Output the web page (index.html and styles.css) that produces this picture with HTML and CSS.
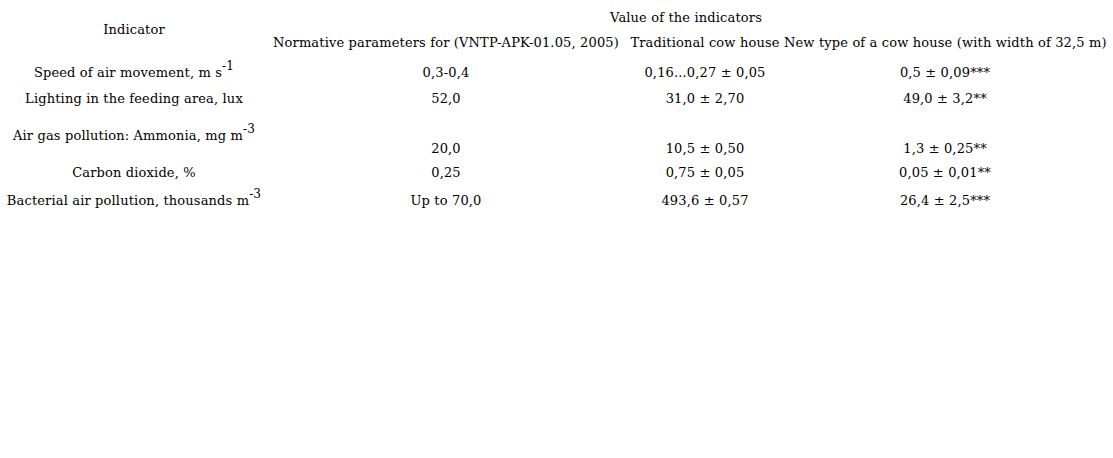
FILE: index.html
```html
<!DOCTYPE html>
<html>
<head>
<meta charset="utf-8">
<link rel="stylesheet" href="styles.css">
</head>
<body>
<table class="data">
  <colgroup>
    <col class="c0"><col class="c1"><col class="c2"><col class="c3">
  </colgroup>
  <tr class="r1">
    <td rowspan="2" class="ind">Indicator</td>
    <td colspan="3">Value of the indicators</td>
  </tr>
  <tr class="r2">
    <td>Normative parameters for (VNTP-APK-01.05, 2005)</td>
    <td>Traditional cow house</td>
    <td>New type of a cow house (with width of 32,5 m)</td>
  </tr>
  <tr class="r3">
    <td>Speed of air movement, m s<sup>-1</sup></td>
    <td>0,3-0,4</td>
    <td>0,16...0,27 ± 0,05</td>
    <td>0,5 ± 0,09***</td>
  </tr>
  <tr class="r4">
    <td>Lighting in the feeding area, lux</td>
    <td>52,0</td>
    <td>31,0 ± 2,70</td>
    <td>49,0 ± 3,2**</td>
  </tr>
  <tr class="r5">
    <td class="top">Air gas pollution: Ammonia, mg m<sup>-3</sup></td>
    <td class="bot">20,0</td>
    <td class="bot">10,5 ± 0,50</td>
    <td class="bot">1,3 ± 0,25**</td>
  </tr>
  <tr class="r6">
    <td>Carbon dioxide, %</td>
    <td>0,25</td>
    <td>0,75 ± 0,05</td>
    <td>0,05 ± 0,01**</td>
  </tr>
  <tr class="r7">
    <td>Bacterial air pollution, thousands m<sup>-3</sup></td>
    <td>Up to 70,0</td>
    <td>493,6 ± 0,57</td>
    <td>26,4 ± 2,5***</td>
  </tr>
</table>
</body>
</html>
```
FILE: styles.css
```css
body {
  margin: 7px 2px 8px;
  background: #fff;
  color: #000;
  font-family: "DejaVu Serif", serif;
  font-size: 13px;
  letter-spacing: 0.15px;
}
.data {
  border-collapse: separate;
  border-spacing: 2px;
  table-layout: fixed;
  width: 1106px;
}
.c0 { width: 260px; }
.c1 { width: 360px; }
.c2 { width: 154px; }
.c3 { width: 322px; }
.data td {
  text-align: center;
  vertical-align: middle;
  padding: 0;
  line-height: 16px;
  white-space: nowrap;
}
.data sup {
  font-size: 12px;
  line-height: 0;
  vertical-align: 7px;
}
.data .ind { padding-bottom: 6px; }
.r1 td { height: 18px; }
.r2 td { height: 28px; }
.r3 td { height: 28px; }
.r4 td { height: 20px; }
.r5 td { height: 48px; }
.r5 .top { vertical-align: top; padding-top: 17px; height: 31px; }
.r5 .bot { vertical-align: bottom; padding-bottom: 2px; height: 46px; }
.r6 td { height: 24px; }
.r7 td { height: 28px; }
```
